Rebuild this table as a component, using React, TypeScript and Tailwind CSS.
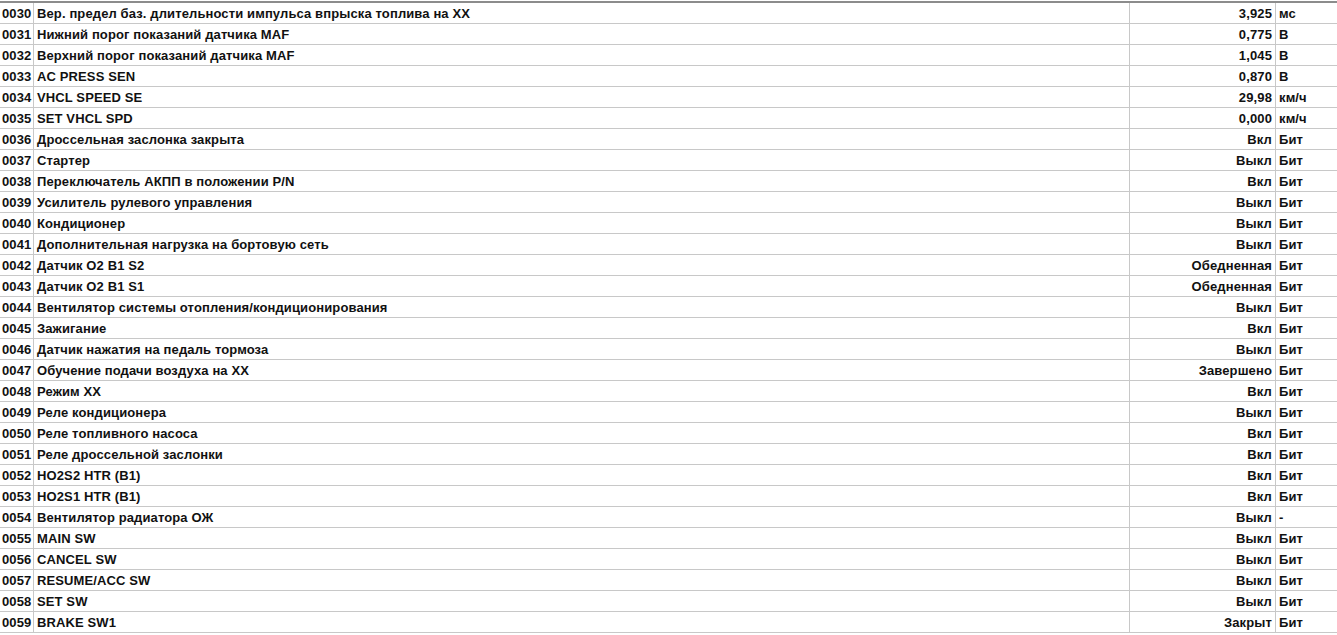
import React from "react";

const rows: [string, string, string, string][] = [
  ["0030", "Вер. предел баз. длительности импульса впрыска топлива на ХХ", "3,925", "мс"],
  ["0031", "Нижний порог показаний датчика MAF", "0,775", "В"],
  ["0032", "Верхний порог показаний датчика MAF", "1,045", "В"],
  ["0033", "AC PRESS SEN", "0,870", "В"],
  ["0034", "VHCL SPEED SE", "29,98", "км/ч"],
  ["0035", "SET VHCL SPD", "0,000", "км/ч"],
  ["0036", "Дроссельная заслонка закрыта", "Вкл", "Бит"],
  ["0037", "Стартер", "Выкл", "Бит"],
  ["0038", "Переключатель АКПП в положении P/N", "Вкл", "Бит"],
  ["0039", "Усилитель рулевого управления", "Выкл", "Бит"],
  ["0040", "Кондиционер", "Выкл", "Бит"],
  ["0041", "Дополнительная нагрузка на бортовую сеть", "Выкл", "Бит"],
  ["0042", "Датчик O2 B1 S2", "Обедненная", "Бит"],
  ["0043", "Датчик O2 B1 S1", "Обедненная", "Бит"],
  ["0044", "Вентилятор системы отопления/кондиционирования", "Выкл", "Бит"],
  ["0045", "Зажигание", "Вкл", "Бит"],
  ["0046", "Датчик нажатия на педаль тормоза", "Выкл", "Бит"],
  ["0047", "Обучение подачи воздуха на ХХ", "Завершено", "Бит"],
  ["0048", "Режим ХХ", "Вкл", "Бит"],
  ["0049", "Реле кондиционера", "Выкл", "Бит"],
  ["0050", "Реле топливного насоса", "Вкл", "Бит"],
  ["0051", "Реле дроссельной заслонки", "Вкл", "Бит"],
  ["0052", "HO2S2 HTR (B1)", "Вкл", "Бит"],
  ["0053", "HO2S1 HTR (B1)", "Вкл", "Бит"],
  ["0054", "Вентилятор радиатора ОЖ", "Выкл", "-"],
  ["0055", "MAIN SW", "Выкл", "Бит"],
  ["0056", "CANCEL SW", "Выкл", "Бит"],
  ["0057", "RESUME/ACC SW", "Выкл", "Бит"],
  ["0058", "SET SW", "Выкл", "Бит"],
  ["0059", "BRAKE SW1", "Закрыт", "Бит"],
];

export default function App() {
  return (
    <div
      className="w-[1337px] h-[635px] bg-white overflow-hidden text-[#111] font-bold text-[13px] tracking-[0.12px]"
      style={{ fontFamily: '"Liberation Sans", Arial, sans-serif' }}
    >
      <div className="mt-[1px] border-t-2 border-[#8c8c8c]">
        {rows.map(([id, name, val, unit]) => (
          <div key={id} className="flex h-[21px] border-b border-[#c8c8c8] leading-[21px] whitespace-nowrap">
            <div className="w-[34px] shrink-0 border-r border-[#c8c8c8] pl-[2px]">{id}</div>
            <div className="w-[1096px] shrink-0 border-r border-[#c8c8c8] pl-[3px]">{name}</div>
            <div className="w-[146px] shrink-0 border-r border-[#c8c8c8] pr-[3px] text-right">{val}</div>
            <div className="flex-1 pl-[3px]">{unit}</div>
          </div>
        ))}
      </div>
    </div>
  );
}
